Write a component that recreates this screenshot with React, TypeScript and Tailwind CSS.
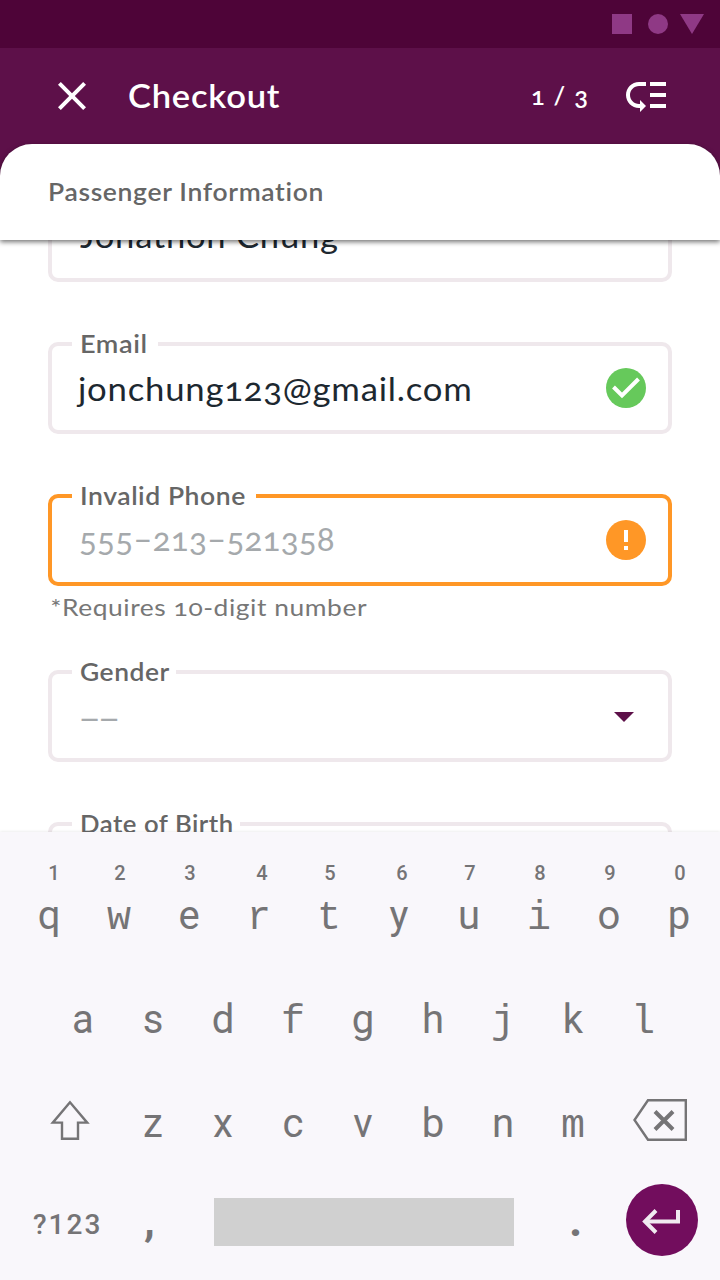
import type { ReactNode } from "react";
import { MdClose, MdLowPriority } from "react-icons/md";

function Field({
  label,
  notch,
  tone = "border-[#efe8ec]",
  labelStretch = "",
  children,
}: {
  label?: string;
  notch?: string;
  tone?: string;
  labelStretch?: string;
  children?: ReactNode;
}) {
  return (
    <div className={`relative flex h-[92px] shrink-0 items-center justify-between rounded-[10px] border-4 pr-[22px] pl-7 ${tone}`}>
      {label && (
        <span className={`absolute -top-4 left-5 h-7 bg-white pl-2 text-2xl leading-7 font-semibold whitespace-nowrap text-[#666] ${notch}`}>
          <span className={`inline-block origin-left tracking-[0.5px] ${labelStretch}`}>{label}</span>
        </span>
      )}
      {children}
    </div>
  );
}

function Key({ ch, hint, hintShift = "" }: { ch: string; hint?: string; hintShift?: string }) {
  const mono = "fijlmrtw".includes(ch);
  return (
    <div className="flex w-[70px] flex-col items-center">
      {hint && (
        <span className={`relative -top-px h-6 font-['Roboto'] text-[20px] leading-6 font-medium ${hintShift}`}>{hint}</span>
      )}
      <span
        className={
          mono
            ? "h-12 pt-[9px] font-['Liberation_Mono',monospace] text-[40px] leading-[48px]"
            : "h-12 pt-[6px] font-['Roboto',sans-serif] text-[40px] leading-[48px]"
        }
      >
        {ch}
      </span>
    </div>
  );
}

const hints = [
  "left-[5px]",
  "left-px",
  "left-px",
  "left-[3px]",
  "left-px",
  "left-[3px]",
  "left-px",
  "left-px",
  "left-px",
  "left-px",
];

export default function App() {
  return (
    <div className="flex h-[1280px] w-[720px] flex-col overflow-hidden bg-white font-['Lato',sans-serif]">
      <div className="flex h-12 shrink-0 items-center justify-end bg-[#4e0438] pr-4">
        <svg width="92" height="20" viewBox="0 0 92 20" fill="#8f3985">
          <rect width="20" height="20" />
          <circle cx="46" cy="10" r="10" />
          <path d="M68 0h24L80 20z" />
        </svg>
      </div>

      <header className="flex h-24 shrink-0 items-center bg-[#5d1049] pr-[50px] pl-12 text-white">
        <MdClose size={48} />
        <h1 className="ml-8 w-[403px]">
          <span className="inline-block origin-left scale-x-[1.08] text-[32px] font-semibold tracking-[0.7px]">Checkout</span>
        </h1>
        <span className="w-[91px]">
          <span className="inline-block origin-left scale-x-[1.06] text-2xl font-semibold tracking-[1.2px] [font-feature-settings:'onum']">
            1 / 3
          </span>
        </span>
        <MdLowPriority size={48} />
      </header>

      <div className="relative z-10 h-24 shrink-0 bg-[linear-gradient(#5d1049_40px,#fff_40px)]">
        <div className="flex h-24 items-center rounded-t-[32px] bg-white pl-12 shadow-[0_2px_5px_rgba(0,0,0,0.55)]">
          <h2 className="origin-left scale-x-[1.104] text-2xl font-semibold tracking-[0.6px] text-[#666]">Passenger Information</h2>
        </div>
      </div>

      <main className="flex h-[592px] shrink-0 flex-col overflow-hidden px-12 text-[32px] text-[#1d2830]">
        <div className="-mt-[50px] flex flex-col">
          <Field>
            <span className="origin-left scale-x-[1.08] tracking-[0.7px]">Jonathon Chung</span>
          </Field>
          <div className="h-[60px]" />
          <Field label="Email" notch="w-[86px]" labelStretch="scale-x-[1.13]">
            <span className="-ml-[2px] origin-left scale-x-[1.085] pt-px tracking-[0.7px] [font-feature-settings:'onum']">
              jonchung123@gmail.com
            </span>
            <svg width="40" height="40" viewBox="0 0 40 40">
              <circle cx="20" cy="20" r="20" fill="#66c95b" />
              <path d="M7.5 19l8.5 8.5L32.5 11" fill="none" stroke="#fff" strokeWidth="4" />
            </svg>
          </Field>
          <div className="h-[60px]" />
          <Field label="Invalid Phone" notch="w-[184px]" tone="border-[#ff9726]" labelStretch="scale-x-[1.105]">
            <span className="-ml-px origin-left scale-x-[1.035] pb-[2px] tracking-[0.2px] text-[#a5a9ac] [font-feature-settings:'onum']">
              555–213–521358
            </span>
            <svg width="40" height="40" viewBox="0 0 40 40">
              <circle cx="20" cy="20" r="20" fill="#ff9726" />
              <path d="M18 10h4v12h-4zM18 26h4v4h-4z" fill="#fff" />
            </svg>
          </Field>
          <p className="h-[84px] origin-left scale-x-[1.1] pt-[6px] pl-[2px] text-2xl leading-[30px] tracking-[0.5px] text-[#777] [font-feature-settings:'onum']">
            *Requires 10-digit number
          </p>
          <Field label="Gender" notch="w-[104px]" labelStretch="scale-x-[1.1]">
            <span className="-ml-[2px] origin-left scale-x-[1.25] pt-1 tracking-[-3px] text-[#a5a9ac]">––</span>
            <svg className="mt-[2px] mr-3" width="20" height="10" viewBox="0 0 20 10">
              <path d="M0 0h20L10 10z" fill="#5d1049" />
            </svg>
          </Field>
          <div className="h-[60px]" />
          <Field label="Date of Birth" notch="w-[168px]" labelStretch="scale-x-[1.07]" />
        </div>
      </main>

      <section className="relative flex h-[448px] shrink-0 flex-col bg-[#f9f7fb] text-[#757476] shadow-[0_0_3px_rgba(0,0,0,0.12)]">
        <div className="flex pt-[30px] pl-[14px]">
          {[..."qwertyuiop"].map((ch, i) => (
            <Key key={ch} ch={ch} hint={"1234567890"[i]} hintShift={hints[i]} />
          ))}
        </div>
        <div className="flex pt-14 pl-12">
          {[..."asdfghjkl"].map((ch) => (
            <Key key={ch} ch={ch} />
          ))}
        </div>
        <div className="flex pt-14 pl-12">
          <svg className="mt-[2px] mr-[26px]" width="44" height="48" viewBox="0 0 44 48" fill="none" stroke="#757476" strokeWidth="2.4">
            <path d="M22 6.3L4.8 26.6H14V42.8H30V26.6H39.2Z" />
          </svg>
          {[..."zxcvbnm"].map((ch) => (
            <Key key={ch} ch={ch} />
          ))}
          <svg className="mt-[2px] ml-[23px]" width="56" height="48" viewBox="0 0 56 48" fill="none" stroke="#757476">
            <path d="M17 4.2H54.8V43.8H17L3.5 24Z" strokeWidth="2.4" />
            <path d="M24 15.5L42 33.5M42 15.5L24 33.5" strokeWidth="4" />
          </svg>
        </div>
        <div className="flex items-center pt-10 pl-[33px]">
          <span className="w-[111px] pt-[10px] font-['Roboto',sans-serif] text-[28px] font-medium tracking-[2px]">?123</span>
          <span className="w-[70px] font-['Roboto',sans-serif] text-[44px] leading-[72px] font-bold">,</span>
          <span className="mt-1 h-12 w-[300px] bg-[#d0d0d0]" />
          <span className="w-28 pl-[55px] font-['Roboto',sans-serif] text-[46px] leading-[72px] font-bold">.</span>
          <span className="flex size-[72px] items-center justify-center rounded-full bg-[#720d5d]">
            <svg className="-ml-[2px]" width="40" height="28" viewBox="0 0 40 28" fill="none" stroke="#f0eaf0" strokeWidth="4">
              <path d="M4 15.5H37V4" />
              <path d="M15 4.5L4 15.5L15 26.5" />
            </svg>
          </span>
        </div>
      </section>
    </div>
  );
}
